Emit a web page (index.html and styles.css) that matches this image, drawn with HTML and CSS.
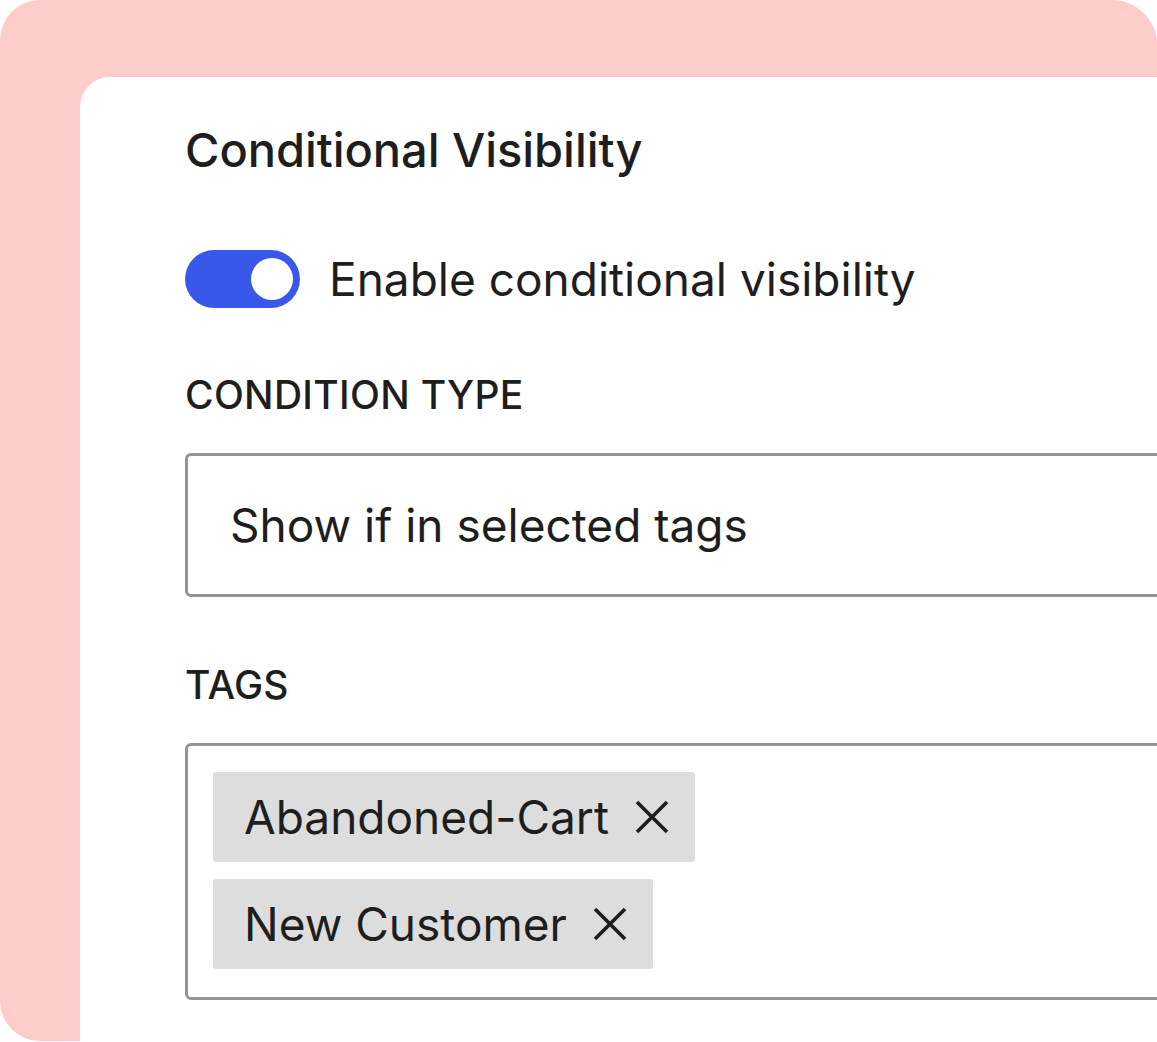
FILE: index.html
```html
<!DOCTYPE html>
<html>
<head>
<meta charset="utf-8">
<link rel="stylesheet" href="styles.css">
</head>
<body>
<div class="frame">
  <div class="panel">
    <h2 class="title">Conditional Visibility</h2>
    <div class="toggle-row">
      <span class="toggle"><span class="knob"></span></span>
      <span class="toggle-label">Enable conditional visibility</span>
    </div>
    <div class="label">CONDITION TYPE</div>
    <div class="select">Show if in selected tags</div>
    <div class="label tags-label">TAGS</div>
    <div class="tags-box">
      <span class="tag">Abandoned-Cart
        <svg class="x" viewBox="0 0 34 34"><path d="M2 2 L32 32 M32 2 L2 32" stroke="#1e1e1e" stroke-width="3.6" fill="none"/></svg>
      </span>
      <span class="tag">New Customer
        <svg class="x" viewBox="0 0 34 34"><path d="M2 2 L32 32 M32 2 L2 32" stroke="#1e1e1e" stroke-width="3.6" fill="none"/></svg>
      </span>
    </div>
  </div>
</div>
</body>
</html>
```

FILE: styles.css
```css
html, body {
  margin: 0;
  padding: 0;
  background: #ffffff;
}
body {
  width: 1157px;
  height: 1042px;
  overflow: hidden;
  font-family: Inter, "Liberation Sans", sans-serif;
  color: #1e1e1e;
}
.frame {
  height: 1041px;
  background: #ffcccc;
  border-radius: 40px 45px 0 40px;
  padding: 77px 0 0 80px;
  box-sizing: border-box;
  overflow: hidden;
}
.panel {
  background: #ffffff;
  border-top-left-radius: 30px;
  height: 1000px;
  padding: 0 0 0 105px;
  overflow: hidden;
}
.title {
  margin: 0;
  padding-top: 46px;
  font-size: 47px;
  font-weight: 500;
  line-height: 54px;
  letter-spacing: -0.05px;
}
.toggle-row {
  display: flex;
  align-items: center;
  margin-top: 73px;
  gap: 29px;
}
.toggle {
  width: 115px;
  height: 58px;
  border-radius: 29px;
  background: #3858e9;
  display: flex;
  align-items: center;
  justify-content: flex-end;
  padding-right: 7px;
  box-sizing: border-box;
}
.knob {
  width: 42px;
  height: 42px;
  border-radius: 50%;
  background: #ffffff;
}
.toggle-label {
  font-size: 46px;
  line-height: 58px;
}
.label {
  font-size: 39px;
  font-weight: 500;
  line-height: 44px;
  margin-top: 65px;
  letter-spacing: 0.3px;
}
.select {
  margin-top: 36px;
  width: 1100px;
  height: 144px;
  border: 3px solid #949494;
  border-radius: 6px;
  box-sizing: border-box;
  display: flex;
  align-items: center;
  padding-left: 42px;
  font-size: 46px;
}
.tags-label {
  margin-top: 66px;
}
.tags-box {
  margin-top: 36px;
  width: 1100px;
  height: 257px;
  border: 3px solid #949494;
  border-radius: 6px;
  box-sizing: border-box;
  padding: 26px 0 0 25px;
  display: flex;
  flex-direction: column;
  align-items: flex-start;
  gap: 17px;
}
.tag {
  display: flex;
  align-items: center;
  height: 90px;
  background: #dddddd;
  border-radius: 3px;
  padding: 0 26px 0 31px;
  font-size: 46px;
  gap: 26px;
}
.x {
  width: 34px;
  height: 34px;
}
```
